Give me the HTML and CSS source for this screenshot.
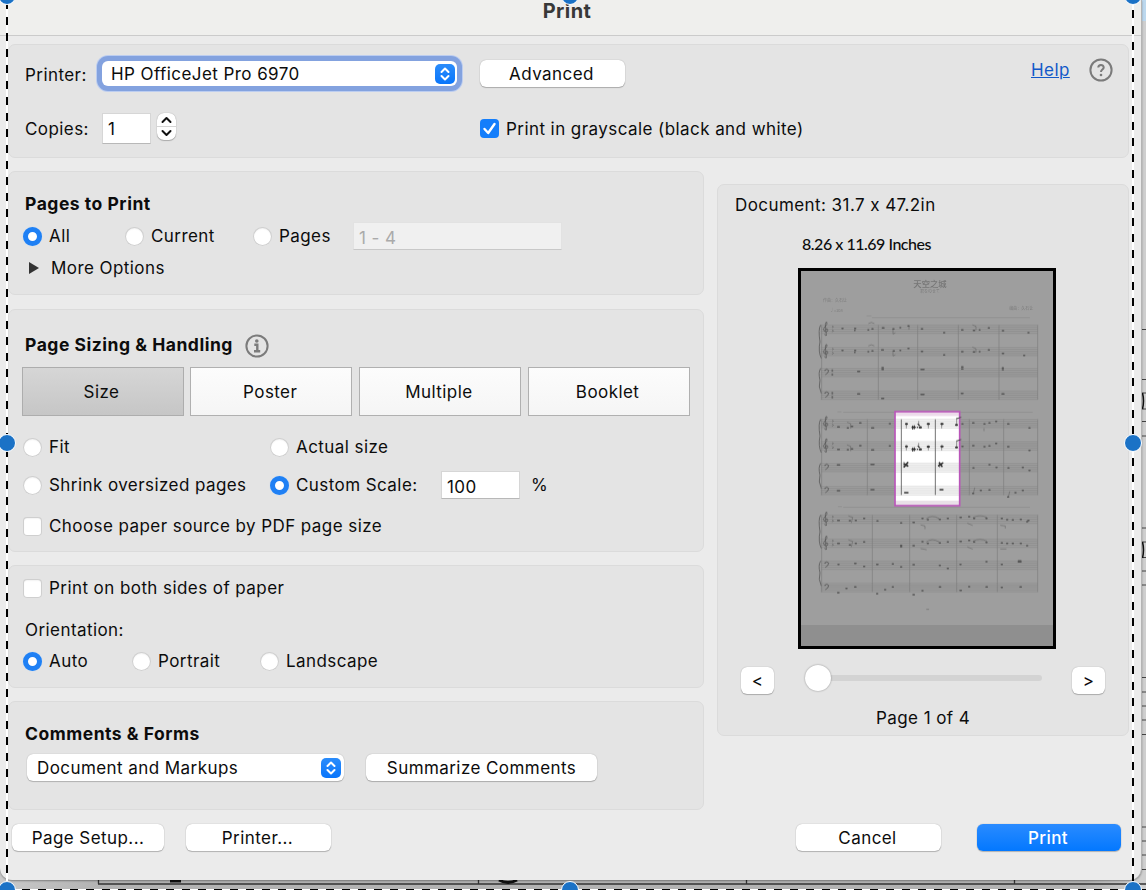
FILE: index.html
```html
<!DOCTYPE html>
<html lang="en">
  <head>
    <meta charset="utf-8" />
    <title>Print</title>
    <link rel="stylesheet" href="styles.css">
  </head>
  <body>
    <div class="screen">
      <svg class="backdrop" width="1146" height="890" viewBox="0 0 1146 890">
        <defs>
          <linearGradient id="shade" x1="0" x2="1" y1="0" y2="0">
            <stop offset="0" stop-color="#c9c9c9" />
            <stop offset="0.09" stop-color="#b2b2b2" />
            <stop offset="0.95" stop-color="#b2b2b2" />
            <stop offset="1" stop-color="#cfcfcf" />
          </linearGradient>
        </defs>
        <rect width="1146" height="890" fill="#cfcfcf" />
        <rect x="1140" width="6" height="21" fill="#bcd8ee" />
        <rect y="868" width="1141" height="22" fill="url(#shade)" />
        <path d="M98 884H1146M98.500 880V884M478.500 880V884M746.500 880V884M1014.500 880V884" stroke="#333" stroke-width="1.300" fill="none" />
        <path d="M170 881H181M499 880q9 5 18 0" stroke="#111" stroke-width="3" fill="none" />
        <path d="M1140 329.500h6M1140 379.500h6M1140 393h6M1140 409h6M1140 421.500h6M1140 436h6M1140 528h6M1140 542h6M1140 557.500h6M1140 571h6M1140 585h6M1140 677.500h6M1140 692h6M1140 706h6M1140 720h6M1140 734.500h6M1140 827h6M1140 841h6M1140 855h6M1140 869.500h6" stroke="#444" />
        <path d="M1142.500 393q2 8 0 16M1142.500 542q2 8 0 16" stroke="#111" stroke-width="1.500" fill="none" />
      </svg>

      <div class="dialog">
        <div class="titlebar">Print</div>

        <div class="panel panel-printer">
          <div class="row row-printer">
            <span class="label printer-label">Printer:</span>
            <div class="select select-focus">
              <span>HP OfficeJet Pro 6970</span>
              <svg class="knob" viewBox="0 0 20 20"><path d="M6.500 8L10 4.500L13.500 8M6.500 12L10 15.500L13.500 12" /></svg>
            </div>
            <button class="btn btn-advanced">Advanced</button>
            <a class="help" href="#">Help</a>
            <svg class="round-icon" viewBox="0 0 24 24">
              <circle cx="12" cy="12" r="10.600" />
              <path d="M9.300 9.600C9.300 6.200 14.700 6.200 14.700 9.500C14.700 11.600 12 11.600 12 14" />
              <circle class="dot" cx="12" cy="17" r="1.300" />
            </svg>
          </div>
          <div class="row row-copies">
            <span class="label copies-label">Copies:</span>
            <div class="field field-copies">1</div>
            <svg class="stepper" viewBox="0 0 19 27">
              <path class="split" d="M0 13.500H19" />
              <path d="M5.500 9L9.500 5L13.500 9M5.500 18L9.500 22L13.500 18" />
            </svg>
            <div class="option grayscale">
              <svg class="check checked" viewBox="0 0 19 19"><path d="M4.500 10L8.200 14L14.500 5" /></svg>
              <span>Print in grayscale (black and white)</span>
            </div>
          </div>
        </div>

        <div class="columns">
          <div class="left">
            <div class="panel panel-pages">
              <h2>Pages to Print</h2>
              <div class="row row-pages">
                <div class="option"><i class="radio on"></i><span>All</span></div>
                <div class="option"><i class="radio"></i><span>Current</span></div>
                <div class="option"><i class="radio"></i><span>Pages</span></div>
                <div class="field field-range">1 - 4</div>
              </div>
              <div class="row row-more">
                <svg class="triangle" viewBox="0 0 10 12"><path d="M0 0L10 6L0 12Z" /></svg>
                <span>More Options</span>
              </div>
            </div>

            <div class="panel panel-sizing">
              <div class="row row-heading">
                <h2>Page Sizing &amp; Handling</h2>
                <svg class="round-icon" viewBox="0 0 24 24">
                  <circle cx="12" cy="12" r="10.600" />
                  <circle class="dot" cx="11.800" cy="7" r="1.800" />
                  <path class="stem" d="M9.300 10.800H12.300V17M9 17.300H15.200" />
                </svg>
              </div>
              <div class="tabs">
                <button class="tab active">Size</button>
                <button class="tab">Poster</button>
                <button class="tab">Multiple</button>
                <button class="tab">Booklet</button>
              </div>
              <div class="row row-fit">
                <div class="option"><i class="radio"></i><span>Fit</span></div>
                <div class="option"><i class="radio"></i><span>Actual size</span></div>
              </div>
              <div class="row row-fit row-shrink">
                <div class="option"><i class="radio"></i><span>Shrink oversized pages</span></div>
                <div class="option"><i class="radio on"></i><span>Custom Scale:</span></div>
                <div class="field field-scale">100</div>
                <span class="percent">%</span>
              </div>
              <div class="row row-source">
                <div class="option"><i class="check"></i><span>Choose paper source by PDF page size</span></div>
              </div>
            </div>

            <div class="panel panel-orient">
              <div class="row row-sides">
                <div class="option"><i class="check"></i><span>Print on both sides of paper</span></div>
              </div>
              <div class="row row-orient-label"><span class="label">Orientation:</span></div>
              <div class="row row-orient">
                <div class="option"><i class="radio on"></i><span>Auto</span></div>
                <div class="option"><i class="radio"></i><span>Portrait</span></div>
                <div class="option"><i class="radio"></i><span>Landscape</span></div>
              </div>
            </div>

            <div class="panel panel-comments">
              <h2>Comments &amp; Forms</h2>
              <div class="row row-comments">
                <div class="select select-markups">
                  <span>Document and Markups</span>
                  <svg class="knob" viewBox="0 0 20 20"><path d="M6.500 8L10 4.500L13.500 8M6.500 12L10 15.500L13.500 12" /></svg>
                </div>
                <button class="btn btn-summarize">Summarize Comments</button>
              </div>
            </div>
          </div>

          <div class="panel panel-preview">
            <p class="doc-size">Document: 31.7 x 47.2in</p>
            <p class="paper-size">8.26 x 11.69 Inches</p>
            <svg class="preview" width="258" height="381" viewBox="0 0 258 381">
              <defs>
                <g id="staff">
                  <rect width="651" height="26" fill="#000" opacity="0.030" />
                  <path d="M0 0H651M0 6.500H651M0 13H651M0 19.500H651M0 26H651" stroke="#777" stroke-width="1.200" opacity="0.500" />
                </g>
                <g id="treble">
                  <path d="M14 30q-6 4-7-3M12 30L9-2q1-9 5-6q2 5-6 13q-8 8-2 14q8 5 11-2q0-7-6-5q-5 3-1 6" fill="none" stroke="#505050" stroke-width="2" />
                  <path d="M30 3q6 2 0 5M30 14q6 3 0 7" fill="none" stroke="#606060" stroke-width="2.500" />
                </g>
                <g id="bass">
                  <path d="M7 6q7-7 12 0q0 8-10 13M7 6h3" fill="none" stroke="#555" stroke-width="2.500" />
                </g>
                <clipPath id="lit"><rect x="314" y="454" width="196" height="284" /></clipPath>
                <g id="system2">
                  <use href="#staff" x="92" y="478" /><use href="#staff" x="92" y="545" />
                  <use href="#staff" x="92" y="610" /><use href="#staff" x="92" y="679" />
                </g>
                <g id="notes2">
                  <path d="M349 491V504M386 484V497M415 490V504M455 490V504M500 474V494M349 557V570M386 550V562M415 557V570M455 557V570M500 542V562M342 622V606M449 622V606" stroke-width="1.500" />
                  <path d="M348 492h3M413 492h4M454 492h4M498 495h3M348 559h3M413 560h4M454 559h4M498 562h3" stroke-width="6" />
                  <path d="M368 498v9M373 497v9M366 502h10M382 502h1M390 502h3M384 492l4 4M368 564v9M373 563v9M366 568h10M382 568h1M390 568h3M384 558l4 4" stroke-width="3.500" />
                  <path d="M390 502h2M390 568h2" stroke-width="7" />
                  <path d="M343 620l10-12M343 612l10 6M446 617l12-8M448 609l8 10" stroke-width="5" />
                  <path d="M344 698h10M450 689h9" stroke-width="4" />
                </g>
              </defs>
              <rect width="258" height="381" fill="#000" />
              <rect x="3" y="3" width="252" height="375" fill="#9e9e9e" />
              <rect x="3" y="357" width="252" height="21" fill="#8f8f8f" />
              <g transform="translate(-8 -8) scale(0.33333)">
                <g class="score">
                  <text class="score-title" x="420" y="82">天空之城</text>
                  <text class="score-small" x="420" y="99">君をのせて</text>
                  <text class="score-small" x="135" y="125">作曲：久石让</text>
                  <text class="score-small" x="139" y="156">♩=108</text>
                  <text class="score-small" x="694" y="150">编曲：久石让</text>
                  <path d="M230 168h14M246 173H720M142 456h12M160 457H728M144 740h12M160 742H720" stroke="#8c8c8c" stroke-width="2" />

                  <!-- first system -->
                  <use href="#staff" x="92" y="195" /><use href="#staff" x="92" y="262" />
                  <use href="#staff" x="92" y="325" /><use href="#staff" x="92" y="393" />
                  <!-- third system -->
                  <use href="#staff" x="92" y="765" /><use href="#staff" x="92" y="837" />
                  <use href="#staff" x="92" y="903" /><use href="#staff" x="92" y="970" />
                  <use href="#system2" />
                  <path d="M95 195V419M265 195V419M383 195V419M505 195V419M627 195V419M743 195V419M95 478V705M232 478V705M538 478V705M641 478V705M743 478V705M95 765V996M247 765V996M359 765V996M500 765V996M622 765V996M743 765V996" stroke="#7c7c7c" stroke-width="2" />
                  <path d="M92 195q-8 12-2 50q-6 30 4 50M92 325q-8 12-2 35q-6 20 4 40M92 478q-8 12-2 50q-6 30 4 50M92 610q-8 12-2 35q-6 20 4 40M92 765q-8 12-2 50q-6 30 4 50M92 903q-8 12-2 35q-6 20 4 40" fill="none" stroke="#666" stroke-width="3" />
                  <use href="#treble" x="97" y="195" /><use href="#treble" x="97" y="262" />
                  <use href="#bass" x="97" y="325" /><use href="#bass" x="97" y="393" />
                  <use href="#treble" x="97" y="478" /><use href="#treble" x="97" y="545" />
                  <use href="#bass" x="97" y="610" /><use href="#bass" x="97" y="679" />
                  <use href="#treble" x="97" y="765" /><use href="#treble" x="97" y="837" />
                  <use href="#bass" x="97" y="903" /><use href="#bass" x="97" y="970" />
                  <path d="M127 328v20M127 396v20" stroke="#666" stroke-width="5" stroke-dasharray="7 5" />

                  <g class="notes">
                    <path d="M156 205h3M194 205h3M194 211h1M234 210h2M246 207h3M277 204h5M309 207h3M330 203h2M354 198h3M394 207h4M461 218h3M515 210h4M550 211h4M568 210h2M595 204h3M637 212h4M714 218h3M156 271h3M194 271h3M194 277h1M234 275h2M246 273h3M275 270h5M310 273h3M330 271h2M354 265h3M394 274h4M461 285h3M515 275h4M550 276h4M568 275h2M595 270h3M637 280h4M701 286h3" />
                    <path d="M203 334h6M276 323h4M276 328h4M393 328h9M515 321h4M515 327h4M637 324h3M637 329h3M203 402h6M275 415h6M393 403h9M514 400h5M636 402h6" />
                    <path d="M143 501h5M172 504h3M184 499h4M209 489h4M245 504h6M298 491h3M516 492h3M548 489h4M582 492h3M597 489h3M617 484h3M653 492h4M717 504h3M143 568h5M172 569h3M184 567h4M209 557h4M245 570h6M298 558h3M516 559h3M548 557h4M582 560h3M597 558h3M617 550h3M653 560h4M717 571h3" />
                    <path d="M142 615h7M243 613h9M549 624h3M597 614h3M618 622h3M654 624h3M697 622h3M717 631h3M142 692h7M243 689h9M548 700h3M571 691h3M597 690h3M653 711h3M675 698h3M697 691h3" />
                    <path d="M143 781h5M178 782h3M196 781h3M221 775h3M261 783h3M332 789h3M369 787h4M396 775h3M412 779h3M448 778h3M472 775h3M510 772h4M536 770h3M551 775h3M588 775h3M634 775h3M650 779h3M667 780h3M691 778h3M710 785h3M714 781h3" />
                    <path d="M143 850h5M178 855h3M196 850h3M221 846h3M332 856h3M332 860h3M369 857h4M396 845h3M412 850h3M448 849h3M472 846h3M510 844h4M536 841h3M551 846h3M588 847h3M634 849h3M650 850h3M667 850h3M691 850h3M710 857h3" />
                    <path d="M144 913h3M194 910h4M221 919h3M260 913h4M307 912h3M332 921h3M369 914h4M448 916h3M472 925h3M510 913h3M588 905h3M634 913h3M685 906h8M685 903h8M143 998h4M168 985h3M194 981h4M260 1001h3M284 989h3M307 981h3M369 1004h4M396 992h3M448 981h4M510 991h4M536 980h3M588 981h4M634 982h3M690 981h4" />
                    <path class="slurs" d="M236 190q8-6 16 0M236 257q8-6 16 0M309 207v15l6-3M309 273v15l6-3M357 198v10M548 195l10 4v10M548 262l10 4v10M172 487l10 4v13M172 555l10 4v13M176 768l12 4l-4 16M176 840l12 4l-4 16M393 795l12 3v8M393 866l16 3M410 775q16-12 36 0M410 845q16-12 36 0M550 772q20-10 40 0M550 843q20-10 40 0M533 790l14 6M533 861l14 6M632 796l14 2v6M632 867h16M500 476l14-4M500 543l14-4M550 700l4-16M655 711l4-16M582 506v6M410 1048h6" />
                  </g>
                </g>

                <!-- area that fits on the selected paper -->
                <g clip-path="url(#lit)">
                  <rect x="314" y="454" width="196" height="284" fill="#fff" />
                  <rect x="314" y="456" width="196" height="12" fill="#ecdbea" />
                  <rect x="314" y="722" width="196" height="14" fill="#e9e0e8" />
                  <use href="#system2" />
                  <path d="M334 478V705M436 478V705" stroke="#555" stroke-width="2.500" />
                  <use href="#notes2" class="notes-lit" />
                </g>
                <rect x="315" y="455" width="194" height="282" fill="none" stroke="#b955b9" stroke-width="5" />
                <path d="M500 476l12-4M500 543l12-4" stroke="#444" stroke-width="3" />
              </g>
            </svg>
            <div class="pager">
              <button class="btn btn-step">&lt;</button>
              <div class="slider"><div class="thumb"></div></div>
              <button class="btn btn-step">&gt;</button>
            </div>
            <p class="page-count">Page 1 of 4</p>
          </div>
        </div>

        <div class="footer">
          <button class="btn btn-setup">Page Setup...</button>
          <button class="btn btn-wide">Printer...</button>
          <button class="btn btn-wide btn-cancel">Cancel</button>
          <button class="btn btn-wide btn-print">Print</button>
        </div>
      </div>

      <div class="ants ants-left"></div>
      <div class="ants ants-right"></div>
      <div class="ants ants-bottom"></div>
      <i class="handle h-left v-top"></i>
      <i class="handle h-mid v-top"></i>
      <i class="handle h-right v-top"></i>
      <i class="handle h-left v-mid"></i>
      <i class="handle h-right v-mid"></i>
      <i class="handle h-left v-bottom"></i>
      <i class="handle h-mid v-bottom"></i>
      <i class="handle h-right v-bottom"></i>
    </div>
  </body>
</html>
```
FILE: styles.css
```css
* {
  box-sizing: border-box;
}
body {
  margin: 0;
  font-family: Inter, "Liberation Sans", sans-serif;
  font-size: 17px;
  letter-spacing: 0.43px;
  line-height: 24px;
  color: #0c0c0c;
}
p,
h2 {
  margin: 0;
}
span,
button {
  white-space: nowrap;
}
.screen {
  position: relative;
  width: 1146px;
  height: 890px;
  overflow: hidden;
}
.backdrop {
  position: absolute;
  top: 0;
  left: 0;
}
.dialog {
  position: relative;
  width: 1142px;
  height: 880px;
  background: #ebebeb;
  border-right: 1px solid #b4b4b4;
  border-radius: 0 0 12px 12px;
  box-shadow: 0 1px 2px rgba(0, 0, 0, 0.35);
}
.titlebar {
  height: 36px;
  padding-right: 7px;
  border-bottom: 1px solid #cbcbcb;
  background: #efefed;
  text-align: center;
  font-size: 20px;
  font-weight: 700;
  line-height: 23px;
  color: #383838;
}

/* panels */
.panel {
  background: #e4e4e4;
  border: 1px solid #dbdbdb;
  border-radius: 7px;
  padding-left: 14px;
}
.panel-printer {
  width: 1121px;
  height: 114px;
  margin: 8px 0 0 8px;
  padding-top: 11px;
}
.columns {
  display: flex;
  margin: 13px 0 0 8px;
}
.left {
  width: 696px;
}
.panel-pages {
  height: 124px;
  padding-top: 20px;
}
.panel-sizing {
  height: 243px;
  margin-top: 14px;
  padding-top: 23px;
}
.panel-orient {
  height: 123px;
  margin-top: 13px;
  padding-top: 8px;
}
.panel-comments {
  height: 109px;
  margin-top: 13px;
  padding-top: 20px;
}
.panel-preview {
  width: 412px;
  height: 552px;
  margin: 13px 0 0 13px;
  padding: 8px 0 0 17px;
}
h2 {
  padding-left: 2px;
  font-size: 17.5px;
  font-weight: 700;
  letter-spacing: 0.52px;
}
.label {
  padding-left: 2px;
}

/* rows */
.row {
  display: flex;
  align-items: center;
}
.row-printer {
  height: 36px;
}
.row-copies {
  height: 31px;
  margin-top: 21px;
}
.printer-label {
  width: 74px;
  padding-top: 2px;
}
.copies-label {
  width: 79px;
}
.row-pages {
  display: grid;
  grid-template-columns: 102px 128px 100px 209px;
  height: 28px;
  margin-top: 6px;
}
.row-more {
  height: 24px;
  margin-top: 6px;
  padding-left: 6px;
}
.triangle {
  width: 10px;
  height: 12px;
  margin-right: 12px;
  fill: #333;
}
.row-heading {
  height: 26px;
}
.row-heading h2 {
  margin-top: -2px;
}
.row-heading .round-icon {
  margin-left: 12px;
}
.tabs {
  display: grid;
  grid-template-columns: repeat(4, 162px);
  gap: 6.7px;
  margin: 8px 0 0 -1.5px;
}
.row-fit {
  display: grid;
  grid-template-columns: 247px 171px 79px auto;
  height: 28px;
  margin-top: 17px;
}
.row-shrink {
  margin-top: 10px;
}
.row-source {
  margin-top: 15px;
}
.percent {
  margin-left: 11px;
}
.row-sides,
.row-orient {
  height: 28px;
}
.row-orient-label {
  margin-top: 16px;
}
.row-orient {
  display: grid;
  grid-template-columns: 109px 128px auto;
  margin-top: 5px;
}
.row-comments {
  margin-top: 8px;
  padding-left: 4px;
}

/* controls */
.option {
  display: flex;
  align-items: center;
  gap: 7px;
}
.radio,
.check {
  flex: none;
  width: 19px;
  height: 19px;
  background: #fff;
  border-radius: 50%;
  box-shadow: inset 0 0 0 1px #cfcfcf, inset 0 1px 2px rgba(0, 0, 0, 0.15);
}
.check {
  border-radius: 4px;
}
.radio.on {
  border: 5.5px solid #1f80f4;
  box-shadow: 0 0 1px #9cc8ff;
}
.check.checked {
  background: #147efb;
  box-shadow: none;
  fill: none;
  stroke: #fff;
  stroke-width: 2.4;
  stroke-linecap: round;
  stroke-linejoin: round;
}
.grayscale {
  margin-left: 304px;
}
.select {
  display: flex;
  align-items: center;
  justify-content: space-between;
  height: 27px;
  padding: 0 3px 0 10px;
  background: #fff;
  border-radius: 6px;
  box-shadow: 0 0 1px rgba(0, 0, 0, 0.3), 0 1px 1px rgba(0, 0, 0, 0.2);
}
.select-focus {
  width: 355px;
  height: 25px;
  margin: -1px 0 0 5px;
  padding: 0 2px 0 9px;
  box-shadow: 0 0 0 5px #83a2df, 0 0 0 6px #bccdf0;
}
.select-markups {
  width: 317px;
}
.knob {
  width: 20px;
  height: 20px;
  border-radius: 5px;
  background: linear-gradient(#2a8cfb, #0a76fb);
  fill: none;
  stroke: #fff;
  stroke-width: 2;
  stroke-linecap: round;
  stroke-linejoin: round;
}
.btn {
  flex: none;
  height: 27px;
  padding: 0;
  border: 0;
  border-radius: 6px;
  background: #fff;
  font: inherit;
  letter-spacing: inherit;
  color: #0c0c0c;
  box-shadow: 0 0 1px rgba(0, 0, 0, 0.35), 0 1px 1px rgba(0, 0, 0, 0.22);
}
.btn-advanced {
  width: 145px;
  margin: -1px 0 0 23px;
  padding-right: 2px;
}
.btn-summarize {
  width: 231px;
  margin-left: 22px;
}
.help {
  width: 38px;
  margin: -9px 20px 0 406px;
  color: #1259c9;
}
.round-icon {
  flex: none;
  width: 24px;
  height: 24px;
  fill: none;
  stroke: #7b7b7b;
  stroke-width: 2;
}
.row-printer .round-icon {
  margin-top: -8px;
}
.round-icon .dot {
  fill: #7b7b7b;
  stroke: none;
}
.round-icon .stem {
  stroke-width: 2.4;
}
.field {
  height: 28px;
  padding: 3px 0 0 5px;
  background: #fff;
  border: 1px solid #d6d6d6;
  border-bottom-color: #b8b8b8;
}
.field-copies {
  width: 49px;
  height: 31px;
}
.field-range {
  background: #f0f0f0;
  border-color: #e2e2e2;
  border-bottom-color: #c8c8c8;
  color: #aaa;
}
.stepper {
  width: 19px;
  height: 27px;
  margin: -4px 0 0 6px;
  border-radius: 7px;
  background: #fff;
  box-shadow: 0 0 1px rgba(0, 0, 0, 0.35), 0 1px 1px rgba(0, 0, 0, 0.22);
  fill: none;
  stroke: #111;
  stroke-width: 2;
  stroke-linecap: round;
  stroke-linejoin: round;
}
.stepper .split {
  stroke: #d5d5d5;
  stroke-width: 1;
}
.tab {
  height: 49px;
  padding: 0 2px 0 0;
  border: 1.5px solid #b0b0b0;
  background: linear-gradient(#fcfcfc, #f5f5f5);
  font: inherit;
  letter-spacing: inherit;
  color: #0c0c0c;
}
.tab.active {
  background: linear-gradient(#d6d6d6, #c6c6c6);
  border-color: #adadad;
}

/* preview column */
.paper-size {
  margin: 15px 0 0 67px;
  font-family: Lato, sans-serif;
  font-size: 16px;
  font-weight: 500;
  letter-spacing: -0.48px;
}
.preview {
  display: block;
  margin: 12px 0 0 63px;
}
.score {
  filter: blur(0.5px);
}
.score-title {
  font: 500 25px "Noto Sans CJK SC", sans-serif;
  letter-spacing: 0;
  fill: #757575;
  text-anchor: middle;
}
.score-small {
  font: 12px "Noto Sans CJK SC", sans-serif;
  letter-spacing: 0;
  fill: #7d7d7d;
  text-anchor: middle;
}
.notes {
  fill: none;
  stroke: #565656;
  stroke-width: 4.5;
  stroke-linecap: round;
}
.notes .slurs {
  stroke-width: 2;
  opacity: 0.7;
}
.notes-lit {
  fill: none;
  stroke: #333;
  stroke-linecap: round;
}
.pager {
  display: flex;
  align-items: center;
  margin: 18px 0 0 6px;
}
.btn-step {
  width: 33px;
}
.slider {
  width: 236px;
  height: 6px;
  margin: -5px 30px 0 32px;
  border-radius: 3px;
  background: #d3d3d3;
}
.thumb {
  width: 26px;
  height: 26px;
  margin-left: -1px;
  transform: translateY(-10px);
  border-radius: 50%;
  background: #fff;
  box-shadow: 0 0 2px rgba(0, 0, 0, 0.4);
}
.page-count {
  margin: 12px 0 0 141px;
}

.footer {
  display: flex;
  margin: 14px 0 0 12px;
}
.btn-setup {
  width: 152px;
}
.btn-wide {
  width: 145px;
  margin-left: 22px;
  padding-right: 2px;
}
.btn-cancel {
  margin-left: 465px;
}
.btn-print {
  width: 144px;
  margin-left: 36px;
  background: linear-gradient(#2a8bff, #0378ff);
  color: #fff;
  font-weight: 500;
}

/* selection marquee */
.ants {
  position: absolute;
}
.ants-left,
.ants-right {
  top: 0;
  left: 6px;
  width: 2px;
  height: 890px;
  background: repeating-linear-gradient(#fff 0 1px, #000 1px 9px, #fff 9px 16px);
}
.ants-right {
  left: 1132px;
  background: repeating-linear-gradient(#000 0 2px, #fff 2px 10px, #000 10px 16px);
}
.ants-bottom {
  top: 889px;
  left: 0;
  width: 1146px;
  height: 1px;
  background: repeating-linear-gradient(to right, #fff 0 6px, #000 6px 14px, #fff 14px 16px);
}
.handle {
  position: absolute;
  width: 18px;
  height: 18px;
  border: 1.5px solid #fff;
  border-radius: 50%;
  background: #1b72c6;
}
.h-left {
  left: -2px;
}
.h-mid {
  left: 561px;
}
.h-right {
  left: 1124px;
}
.v-top {
  top: -13px;
}
.v-mid {
  top: 434px;
}
.v-bottom {
  top: 881px;
}
```
